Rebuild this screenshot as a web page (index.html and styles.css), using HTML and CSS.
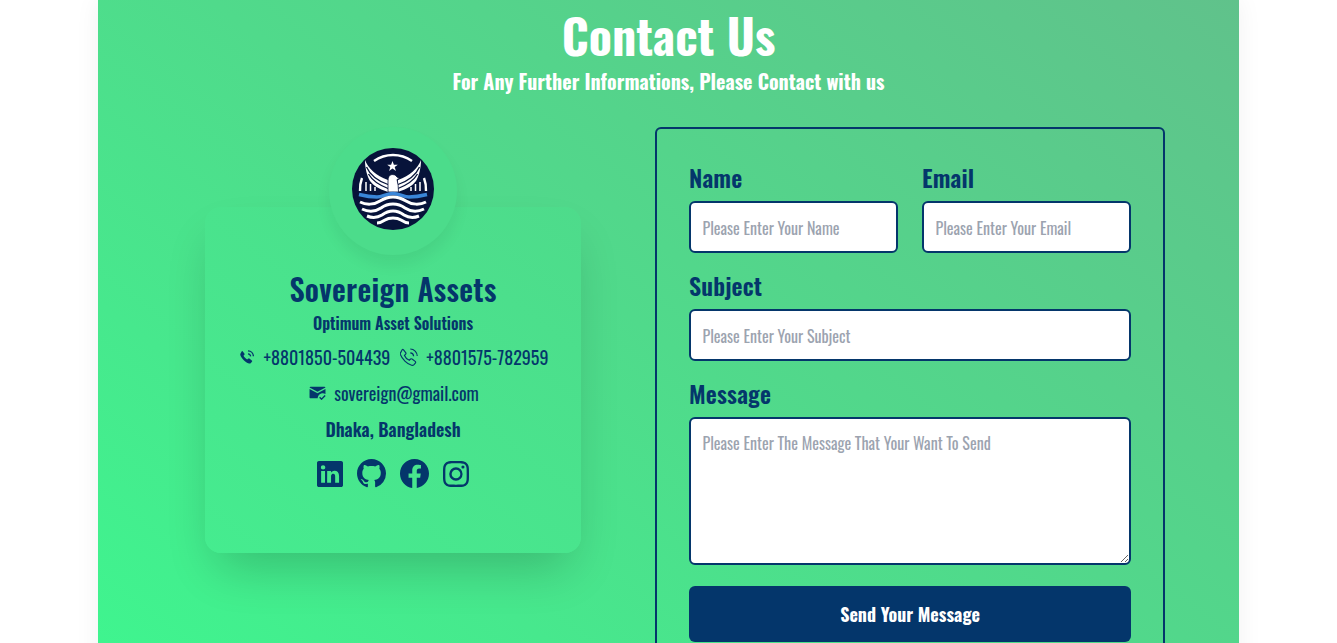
FILE: index.html
```html
<!DOCTYPE html>
<html lang="en">
<head>
<meta charset="utf-8">
<title>Contact Us</title>
<link rel="stylesheet" href="styles.css">
</head>
<body>
<main class="section">
  <header class="head">
    <h1 class="title">Contact Us</h1>
    <p class="subtitle">For Any Further Informations, Please Contact with us</p>
  </header>
  <div class="columns">
    <aside class="card-wrap">
      <div class="avatar">
        <svg class="logo" viewBox="0 0 82 82">
          <circle cx="41" cy="41" r="41" fill="#07133a"/>
          <path d="M22 13A33 33 0 0 1 60 13" fill="none" stroke="#fff" stroke-width="2.400"/>
          <path d="M8 43A33 33 0 0 1 10 30M74 43A33 33 0 0 0 72 30" fill="none" stroke="#fff" stroke-width="2.400"/>
          <path d="M40.500 13l1.400 3.700h3.900l-3.100 2.400 1.200 3.800-3.400-2.300-3.400 2.300 1.200-3.800-3.100-2.400h3.900z" fill="#fff"/>
          <path d="M13 12C16 20 24 28 36 32L36 44C27 41 22 38 18 33 15 28 13 20 13 12z" fill="#fff"/>
          <path d="M69 12C66 20 58 28 46 32L46 44C55 41 60 38 64 33 67 28 69 20 69 12z" fill="#fff"/>
          <path d="M14.500 19C18 27 26 33 36 36.500M16.500 26C20 32 27 37 36 40.500M67.500 19C64 27 56 33 46 36.500M65.500 26C62 32 55 37 46 40.500" fill="none" stroke="#07133a" stroke-width="1.300"/>
          <path d="M14 34v9M18.500 36v7M23 39v4M68 34v9M63.500 36v7M59 39v4" fill="none" stroke="#fff" stroke-width="1.500"/>
          <path d="M36 44V33q0-6 4-6.500 3.500-.5 5 2.500l2.500 1.500-2.500 1q1.500 5 1.500 12.500z" fill="#fff" stroke="#07133a" stroke-width=".8"/>
          <path d="M7 46.500C13 48 19 49 25 49 30 49 35 45.500 41 45.500S52 49 57 49C63 49 69 48 75 46.500" fill="none" stroke="#3a86d8" stroke-width="3.400"/>
          <path d="M8 54C14 57 22 57 28 53 33 50 37 49 41 49S49 50 54 53C60 57 68 57 74 54" fill="none" stroke="#fff" stroke-width="3"/>
          <path d="M10 61C16 64 23 64 29 60 33 57 37 56 41 56S49 57 53 60C59 64 66 64 72 61" fill="none" stroke="#fff" stroke-width="3"/>
          <path d="M15 68C20 70 25 70 30 67 34 64 37 63 41 63S48 64 52 67C57 70 62 70 67 68" fill="none" stroke="#fff" stroke-width="3"/>
          <path d="M25 75C28 75 30 74 33 72 36 70 38 70 41 70S46 70 49 72C52 74 54 75 57 75" fill="none" stroke="#fff" stroke-width="3"/>
        </svg>
      </div>
      <div class="card">
        <h2 class="brand">Sovereign Assets</h2>
        <p class="tagline">Optimum Asset Solutions</p>
        <div class="row phones">
          <svg class="mini" viewBox="1 1 14 15"><path fill="#04366b" d="M3.600 2.200 5.400 4.600c.3.4.3.9 0 1.200l-.9 1c.5 1.200 2.400 3.200 3.700 3.700l1-.9c.4-.3.9-.3 1.200 0l2.400 1.800c.5.400.5 1 .1 1.400l-1 1.100c-.5.5-1.200.7-1.900.5-2-.6-3.700-1.700-5.200-3.200S2 8 1.300 6c-.2-.7 0-1.400.5-1.900l1-1.900c.2-.3.6-.3.8 0z"/><path fill="none" stroke="#04366b" stroke-width="1.300" d="M9 4.800c1.400.1 2.500 1.200 2.600 2.600M9 1.800c3 .1 5.300 2.500 5.400 5.400"/></svg>
          <span>+8801850-504439</span>
          <svg class="mini-line" viewBox="1 1 14 14"><path fill="none" stroke="#04366b" stroke-width=".9" d="M3.600 2.200 5.400 4.600c.3.4.3.9 0 1.200l-.9 1c.5 1.200 2.400 3.200 3.700 3.700l1-.9c.4-.3.9-.3 1.200 0l2.400 1.800c.5.400.5 1 .1 1.400l-1 1.100c-.5.5-1.200.7-1.900.5-2-.6-3.700-1.700-5.200-3.200S2 8 1.300 6c-.2-.7 0-1.400.5-1.900l1-1.900c.2-.3.6-.3.8 0zM9 4.800c1.400.1 2.500 1.200 2.600 2.600M9 1.800c3 .1 5.300 2.500 5.400 5.400"/></svg>
          <span>+8801575-782959</span>
        </div>
        <div class="row mail">
          <svg class="mini-mail" viewBox="0 1.500 16 13"><path fill="#04366b" d="M1.500 2h13c.5 0 .9.3 1 .8L8 6.800.5 2.800c.1-.5.500-.8 1-.8zM.5 4.300V12c0 .6.400 1 1 1H8.200c0-2.700 2.200-4.800 4.800-4.800.9 0 1.800.2 2.500.7V4.300L8 8.300z"/><path fill="none" stroke="#04366b" stroke-width="1.300" d="m10 12 1.800 1.800 3.400-3.400"/></svg>
          <span>sovereign@gmail.com</span>
        </div>
        <p class="place">Dhaka, Bangladesh</p>
        <div class="socials">
          <svg class="soc small" viewBox="0 0 16 16"><path d="M0 1.146C0 .513.526 0 1.175 0h13.650C15.474 0 16 .513 16 1.146v13.708c0 .633-.526 1.146-1.175 1.146H1.175C.526 16 0 15.487 0 14.854V1.146zm4.943 12.248V6.169H2.542v7.225h2.401zm-1.200-8.212c.837 0 1.358-.554 1.358-1.248-.015-.709-.52-1.248-1.342-1.248-.822 0-1.359.54-1.359 1.248 0 .694.521 1.248 1.327 1.248h.016zm4.908 8.212V9.359c0-.216.016-.432.08-.586.173-.431.568-.878 1.232-.878.869 0 1.216.662 1.216 1.634v3.865h2.401V9.250c0-2.220-1.184-3.252-2.764-3.252-1.274 0-1.845.7-2.165 1.193v.025h-.016a5.540 5.540 0 0 1 .016-.025V6.169h-2.400c.03.678 0 7.225 0 7.225h2.400z"/></svg>
          <svg class="soc" viewBox="0 0 16 16"><path d="M8 0C3.580 0 0 3.580 0 8c0 3.540 2.290 6.530 5.470 7.590.4.07.55-.17.55-.38 0-.19-.01-.82-.01-1.490-2.010.37-2.530-.49-2.690-.94-.09-.23-.48-.94-.82-1.130-.28-.15-.68-.52-.01-.53.63-.01 1.080.58 1.230.82.72 1.210 1.870.87 2.330.66.07-.52.28-.87.51-1.070-1.780-.2-3.640-.89-3.640-3.950 0-.87.31-1.590.82-2.150-.08-.2-.36-1.020.08-2.120 0 0 .67-.21 2.200.82.64-.18 1.320-.27 2-.27.68 0 1.360.09 2 .27 1.530-1.040 2.200-.82 2.200-.82.44 1.100.16 1.920.08 2.120.51.56.82 1.270.82 2.150 0 3.070-1.870 3.750-3.650 3.950.29.25.54.73.54 1.480 0 1.070-.01 1.930-.01 2.200 0 .21.15.46.55.38A8.012 8.012 0 0 0 16 8c0-4.420-3.580-8-8-8z"/></svg>
          <svg class="soc" viewBox="0 0 16 16"><path d="M16 8.049c0-4.446-3.582-8.050-8-8.050C3.580 0-.002 3.603-.002 8.050c0 4.017 2.926 7.347 6.750 7.951v-5.625h-2.030V8.050H6.750V6.275c0-2.017 1.195-3.131 3.022-3.131.876 0 1.791.157 1.791.157v1.980h-1.009c-.993 0-1.303.621-1.303 1.258v1.510h2.218l-.354 2.326H9.250V16c3.824-.604 6.750-3.934 6.750-7.951z"/></svg>
          <svg class="soc small" viewBox="0 0 16 16"><path d="M8 0C5.829 0 5.556.01 4.703.048 3.850.088 3.269.222 2.760.42a3.917 3.917 0 0 0-1.417.923A3.927 3.927 0 0 0 .42 2.760C.222 3.268.087 3.850.048 4.700.01 5.555 0 5.827 0 8.001c0 2.172.01 2.444.048 3.297.04.852.174 1.433.372 1.942.205.526.478.972.923 1.417.444.445.89.719 1.416.923.51.198 1.090.333 1.942.372C5.555 15.990 5.827 16 8 16s2.444-.01 3.298-.048c.851-.04 1.434-.174 1.943-.372a3.916 3.916 0 0 0 1.416-.923c.445-.445.718-.891.923-1.417.197-.509.332-1.090.372-1.942C15.990 10.445 16 10.173 16 8s-.01-2.445-.048-3.299c-.04-.851-.175-1.433-.372-1.941a3.926 3.926 0 0 0-.923-1.417A3.911 3.911 0 0 0 13.240.42c-.51-.198-1.092-.333-1.943-.372C10.443.01 10.172 0 7.998 0h.003zm-.717 1.442h.718c2.136 0 2.389.007 3.232.046.78.035 1.204.166 1.486.275.373.145.64.319.92.599.28.28.453.546.598.92.11.281.24.705.275 1.485.039.843.047 1.096.047 3.231s-.008 2.389-.047 3.232c-.035.78-.166 1.203-.275 1.485a2.470 2.470 0 0 1-.599.919c-.28.28-.546.453-.92.598-.28.11-.704.24-1.485.276-.843.038-1.096.047-3.232.047s-2.390-.009-3.233-.047c-.78-.036-1.203-.166-1.485-.276a2.478 2.478 0 0 1-.92-.598 2.480 2.480 0 0 1-.6-.92c-.109-.281-.24-.705-.275-1.485-.038-.843-.046-1.096-.046-3.233 0-2.136.008-2.388.046-3.231.036-.78.166-1.204.276-1.486.145-.373.319-.64.599-.92.28-.28.546-.453.92-.598.282-.11.705-.24 1.485-.276.738-.034 1.024-.044 2.515-.045v.002zm4.988 1.328a.96.96 0 1 0 0 1.920.96.96 0 0 0 0-1.920zm-4.270 1.122a4.109 4.109 0 1 0 0 8.217 4.109 4.109 0 0 0 0-8.217zm0 1.441a2.667 2.667 0 1 1 0 5.334 2.667 2.667 0 0 1 0-5.334z"/></svg>
        </div>
      </div>
    </aside>
    <form class="form">
      <div class="pair">
        <label class="field"><span class="label">Name</span><input class="control" placeholder="Please Enter Your Name"></label>
        <label class="field"><span class="label">Email</span><input class="control" placeholder="Please Enter Your Email"></label>
      </div>
      <label class="field"><span class="label">Subject</span><input class="control" placeholder="Please Enter Your Subject"></label>
      <label class="field"><span class="label">Message</span><textarea class="control area" placeholder="Please Enter The Message That Your Want To Send"></textarea></label>
      <button class="send" type="button">Send Your Message</button>
    </form>
  </div>
</main>
</body>
</html>
```
FILE: styles.css
```css
* { box-sizing: border-box; }
html, body { margin: 0; height: 643px; overflow: hidden; background: #fff; }
body { font-family: "Oswald", "Roboto Condensed", sans-serif; color: #04366b; }
.section {
  width: 1141px; height: 690px; margin: 0 auto;
  background: linear-gradient(37deg, #3ef68f 0%, #50da8b 50%, #60c28b 100%);
  box-shadow: 0 0 24px rgba(0, 0, 0, .06);
  display: flex; flex-direction: column;
}
.head { text-align: center; color: #fff; padding-top: 5px; height: 127px; }
.title { margin: 0; font-size: 48px; line-height: 60px; font-weight: 700; }
.subtitle { margin: 1px 0 0; font-size: 20px; line-height: 30px; font-weight: 700; }
.columns { display: flex; padding-left: 107px; gap: 74px; align-items: flex-start; }
.card-wrap { width: 376px; }
.avatar {
  width: 128px; height: 128px; border-radius: 50%; margin: 0 auto -48px;
  background: #4cdc8b; box-shadow: 0 10px 15px rgba(0,0,0,.06);
  display: flex; align-items: center; justify-content: center; padding-bottom: 4px;
  position: relative; z-index: 1;
}
.logo { width: 82px; height: 82px; }
.card {
  height: 346px; border-radius: 16px; text-align: center; padding-top: 64px;
  background: linear-gradient(37deg, #45ec8f, #4edb8b);
  box-shadow: 0 25px 50px -12px rgba(0,0,0,.2);
}
.brand { margin: 0; font-size: 30px; line-height: 36px; font-weight: 600; letter-spacing: .3px; }
.tagline { margin: 4px 0 0; font-size: 16px; line-height: 24px; font-weight: 600; }
.row { display: flex; justify-content: center; align-items: center; gap: 10px; font-size: 18px; line-height: 28px; font-weight: 400; }
.phones { margin-top: 8px; padding-left: 2px; }
.mail { margin-top: 8px; gap: 8px; padding-left: 2px; }
.mini { width: 14px; height: 15px; flex: none; }
.mini-line { width: 18px; height: 18px; flex: none; margin-right: -2px; }
.mini-mail { width: 17px; height: 14px; flex: none; }
.place { margin: 8px 0 0; font-size: 18px; line-height: 28px; font-weight: 600; }
.socials { display: flex; justify-content: center; align-items: center; gap: 14px; margin-top: 16px; }
.soc { width: 29px; height: 29px; fill: #04366b; }
.small { width: 26px; height: 26px; }
.form { width: 510px; height: 560px; border: 2px solid #04366b; border-radius: 6px; padding: 32px; display: flex; flex-direction: column; }
.pair { display: grid; grid-template-columns: 1fr 1fr; gap: 24px; }
.field { display: flex; flex-direction: column; margin-bottom: 16px; }
.label { font-size: 24px; line-height: 32px; margin-bottom: 8px; font-weight: 600; letter-spacing: .15px; }
.control {
  height: 52px; border: 2px solid #04366b; border-radius: 6px; background: #fff;
  padding: 2px 12px 0 11.5px; font: 400 16px "Oswald", "Roboto Condensed", sans-serif; color: #04366b; width: 100%;
}
.control::placeholder { color: #9ca3af; }
.area { height: 148px; padding-top: 12px; resize: vertical; display: block; }
.send {
  height: 56px; margin-top: 5px; border: 0; border-radius: 6px; background: #04366b; color: #fff;
  font: 700 18px "Oswald", "Roboto Condensed", sans-serif;
}
```
